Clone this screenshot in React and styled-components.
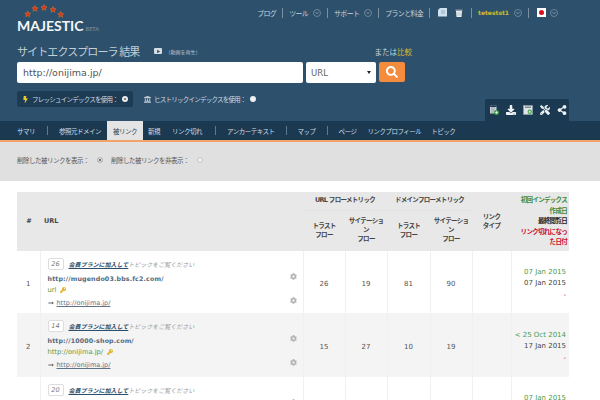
import React from 'react';
import styled, { createGlobalStyle } from 'styled-components';
import { FaBolt, FaChevronDown, FaCog, FaDownload, FaKey, FaLandmark, FaLongArrowAltRight, FaPlay, FaSearch, FaShareAlt, FaTools } from 'react-icons/fa';

const GlobalStyle = createGlobalStyle`
  html, body {
    margin: 0;
    width: 600px;
    height: 400px;
    overflow: hidden;
    background: #fff;
    font-family: "DejaVu Sans", "Noto Sans CJK JP", sans-serif;
  }
  * { box-sizing: border-box; }
`;

const Header = styled.header`
  height: 121px;
  background: #2d506c;
  padding-left: 17px;
  display: flex;
  flex-direction: column;
`;

const TopBar = styled.div`
  height: 40px;
  display: flex;
  justify-content: space-between;
`;

const Logo = styled.div`
  width: 80px;
  padding-top: 4px;
  svg { display: block; margin-left: 7px; }
`;

const LogoText = styled.div`
  display: flex;
  align-items: baseline;
  margin-top: -5px;
  color: #f4f6f8;
  font-family: "Lato", sans-serif;
  font-size: 14px;
  font-weight: 700;
  white-space: nowrap;
  span { margin-left: 2px; font-size: 5.5px; color: #6e8798; }
`;

const TopNav = styled.nav`
  display: flex;
  align-items: center;
  height: 25px;
  padding-right: 34px;
  font-size: 7px;
  letter-spacing: -0.7px;
`;

const TopItem = styled.div`
  display: flex;
  align-items: center;
  gap: ${(p) => (p.$wide ? p.$wide : 5)}px;
  padding: 0 ${(p) => (p.$wide ? 8 : 6)}px;
  height: 10px;
  color: #c9d3db;
  border-left: ${(p) => (p.$first ? 'none' : '1px solid #7890a2')};
`;

const UserName = styled.span`
  color: #d6b92e;
  font-size: 6px;
  font-weight: 700;
  letter-spacing: 0;
`;

const Drop = styled.span`
  width: 8px;
  height: 8px;
  border: 1px solid #6d8598;
  border-radius: 50%;
  display: grid;
  place-items: center;
  color: #8aa0b0;
  svg { width: 4px; height: 4px; }
`;

const Flag = styled.span`
  width: 9px;
  height: 9px;
  background: #fff;
  display: grid;
  place-items: center;
  &::after {
    content: '';
    width: 5px;
    height: 5px;
    border-radius: 50%;
    background: #d8101c;
  }
`;

const TitleRow = styled.div`
  height: 22px;
  width: 395px;
  display: flex;
  align-items: center;
  justify-content: space-between;
`;

const TitleLeft = styled.div`
  display: flex;
  align-items: center;
`;

const Title = styled.h1`
  margin: 0;
  font-size: 11px;
  font-weight: 400;
  letter-spacing: -0.9px;
  color: #c3ced6;
  font-family: "Noto Sans CJK JP", sans-serif;
`;

const Video = styled.span`
  display: flex;
  align-items: center;
  margin-left: 15px;
  color: #b9c6d0;
  font-size: 5px;
  gap: 3px;
`;

const VideoIcon = styled.span`
  width: 8px;
  height: 6px;
  background: #d5dde3;
  border-radius: 1px;
  display: grid;
  place-items: center;
  color: #2d506c;
  svg { width: 3px; height: 3px; }
`;

const Compare = styled.div`
  font-size: 7.5px;
  color: #c9d3db;
  span { color: #d6b92e; }
`;

const SearchRow = styled.form`
  display: flex;
  gap: 3px;
  margin: 0;
`;

const UrlInput = styled.div`
  width: 286px;
  height: 21px;
  padding-left: 6px;
  background: #fff;
  border-radius: 2px;
  color: #555;
  font-size: 9.5px;
  line-height: 21px;
`;

const TypeSelect = styled.div`
  width: 70px;
  height: 21px;
  padding: 0 5px;
  background: #fff;
  border-radius: 2px;
  color: #666;
  font-size: 8.5px;
  display: flex;
  align-items: center;
  justify-content: space-between;
  &::after {
    content: '';
    border: 2.5px solid transparent;
    border-top: 3px solid #222;
    border-bottom: 0;
  }
`;

const SearchButton = styled.div`
  width: 26px;
  height: 20px;
  background: #f58b3d;
  border-radius: 2px;
  color: #fff;
  display: grid;
  place-items: center;
  svg { width: 12px; height: 12px; }
`;

const BottomRow = styled.div`
  flex: 1;
  display: flex;
  justify-content: space-between;
  align-items: flex-end;
  padding-right: 31px;
`;

const IndexOptions = styled.div`
  display: flex;
  align-items: center;
  gap: 11px;
  align-self: flex-start;
  margin-top: 8px;
`;

const IndexOption = styled.div`
  height: 16px;
  padding: 0 ${(p) => (p.$active ? '5px' : '0')};
  background: ${(p) => (p.$active ? '#1d3b53' : 'transparent')};
  border-radius: 2px;
  display: flex;
  align-items: center;
  gap: 2px;
  white-space: nowrap;
  color: #d3dbe1;
  font-size: 6.500px;
  letter-spacing: -0.75px;
  svg { width: 7px; height: 7px; color: ${(p) => (p.$active ? '#e8c92f' : '#c4ccd2')}; margin-right: 1px; }
`;

const OptionRadio = styled.span`
  width: 6px;
  height: 6px;
  border-radius: 50%;
  margin-left: 2px;
  background: #eef1f3;
  border: ${(p) => (p.$on ? '2px solid #e8ecef' : 'none')};
  box-shadow: ${(p) => (p.$on ? 'inset 0 0 0 2px #333' : 'none')};
`;

const ToolTab = styled.div`
  width: 84px;
  height: 22px;
  background: #1b3a52;
  border-radius: 2px 2px 0 0;
  display: flex;
  align-items: center;
  gap: 7px;
  padding-left: 4px;
  color: #eef2f4;
  svg { width: 10px; height: 10px; }
`;

const Nav = styled.nav`
  height: 19px;
  background: #1b3a52;
  padding-left: 17px;
  display: flex;
  align-items: stretch;
  font-size: 6.500px;
  letter-spacing: -0.5px;
  font-family: "Noto Sans CJK JP", sans-serif;
`;

const NavItem = styled.div`
  display: flex;
  align-items: center;
  padding: 0 ${(p) => (p.$active ? '6px' : '0')};
  margin-right: ${(p) => (p.$gap ? p.$gap : 0)}px;
  margin-left: ${(p) => (p.$active ? '-6px' : '0')};
  background: ${(p) => (p.$active ? '#e4e4e4' : 'transparent')};
  color: ${(p) => (p.$active ? '#2b3b48' : '#d3dce3')};
`;

const NavSep = styled.div`
  width: 1px;
  height: 9px;
  align-self: center;
  background: #5e7a8e;
  margin-right: 11px;
`;

const OrangeLine = styled.div`
  height: 2px;
  background: #f2a367;
`;

const FilterBar = styled.div`
  height: 39px;
  background: #e0e0e0;
  padding: 0 17px 3px;
  display: flex;
  align-items: center;
  color: #555;
  font-size: 6.500px;
  letter-spacing: -0.5px;
  font-family: "Noto Sans CJK JP", sans-serif;
`;

const Radio = styled.span`
  width: 6px;
  height: 6px;
  margin: 0 8px 0 8px;
  border-radius: 50%;
  border: 1px solid #c4c4c4;
  background: ${(p) => (p.$on ? '#555' : '#eee')};
  box-shadow: ${(p) => (p.$on ? 'inset 0 0 0 1px #eee' : 'none')};
`;

const Table = styled.table`
  margin: 11px 0 0 17px;
  width: 552px;
  border-collapse: collapse;
  table-layout: fixed;
  font-size: 7px;
  color: #555;
`;

const Head = styled.th`
  background: #e8e8e8;
  padding: 0;
  font-size: 6.500px;
  font-weight: 700;
  letter-spacing: -0.7px;
  color: #444;
  text-align: ${(p) => p.$align || 'center'};
  height: ${(p) => p.$h || 'auto'};
  line-height: 9px;
  border-bottom: ${(p) => (p.$line ? '1px solid #e2e2e2' : 'none')};
`;

const UrlHead = styled.span`
  padding-left: 4px;
  letter-spacing: 0;
`;

const DateHead = styled.div`
  width: 50px;
  margin-left: auto;
  padding-right: 2px;
  line-height: 10.5px;
  text-align: right;
  color: ${(p) => p.$color};
`;

const Row = styled.tr`
  background: ${(p) => (p.$alt ? '#f4f4f4' : '#fff')};
`;

const Cell = styled.td`
  padding: 3px 0 0;
  border-left: 1px solid #f0f0f0;
  text-align: center;
  height: ${(p) => p.$h}px;
  font-size: 7px;
  color: #555;
  &:first-child { border-left: 0; }
`;

const UrlCell = styled.td`
  padding: 0 6px 0 7px;
  border-left: 1px solid #f0f0f0;
  vertical-align: top;
  position: relative;
`;

const TopicLine = styled.div`
  display: flex;
  align-items: center;
  height: 12px;
  margin-top: 7px;
  font-size: 6px;
  font-style: italic;
  color: #999;
  font-family: "Noto Sans CJK JP", sans-serif;
  a { color: #2c4f6b; font-weight: 700; text-decoration: underline; }
`;

const Score = styled.span`
  width: 16px;
  height: 12px;
  margin-right: 5px;
  background: #fff;
  border: 1px solid #ddd;
  border-radius: 2px;
  font-family: "DejaVu Sans", sans-serif;
  font-size: 6.500px;
  font-style: italic;
  color: #777;
  text-align: center;
  line-height: 10px;
`;

const Source = styled.div`
  margin-top: 4px;
  font-size: 6.300px;
  font-weight: 700;
  letter-spacing: 0.15px;
  color: #55687c;
  line-height: 10px;
`;

const Anchor = styled.div`
  margin-top: 1px;
  display: flex;
  align-items: center;
  gap: 4px;
  height: 10px;
  font-size: 6.700px;
  color: #5d9440;
  svg { width: 6px; height: 6px; color: #e3b83c; }
`;

const Target = styled.div`
  margin-top: 3px;
  display: flex;
  align-items: center;
  gap: 3px;
  font-size: 6.500px;
  height: 10px;
  color: #5f7288;
  span { text-decoration: underline; }
  svg { width: 6px; height: 6px; color: #666; }
`;

const Gear = styled.span`
  position: absolute;
  right: 6px;
  top: ${(p) => p.$top}px;
  color: #b4b4b4;
  display: flex;
  svg { width: 7px; height: 7px; }
`;

const DateCell = styled.td`
  padding: 4px 3px 0 0;
  border-left: 1px solid #f0f0f0;
  text-align: right;
  font-size: 7px;
  line-height: 11.500px;
`;

const DateLine = styled.div`
  color: ${(p) => p.$color};
`;

const NotesIcon = () => (
  <svg width="9" height="10" viewBox="0 0 9 10">
    <path d="M2 0h7v8.500H0V2z" fill="#cfe0ee" />
    <path d="M3 3h4M3 5h4" stroke="#7fa3c2" strokeWidth="0.8" />
  </svg>
);

const TrashIcon = () => (
  <svg width="8" height="8" viewBox="0 0 8 8">
    <path d="M0.500 0.500h7v1.500h-7z" fill="#8e9aa3" />
    <path d="M1 2h6l-.5 6h-5z" fill="#eef1f3" />
    <path d="M3 3v4M5 3v4" stroke="#9aa5ad" strokeWidth="0.6" />
  </svg>
);

const AddDbIcon = () => (
  <svg viewBox="0 0 10 10">
    <path d="M1 1.500A3.500 1.500 0 0 1 8 1.500" fill="none" stroke="#58707f" />
    <rect x="1" y="2" width="6.500" height="6.500" fill="#cdd3d8" />
    <path d="M3 2v6.500M5 2v6.500" stroke="#7d8b95" strokeWidth="0.7" />
    <circle cx="7.500" cy="7.500" r="2.500" fill="#37a346" />
    <path d="M6.200 7.500h2.600M7.500 6.200v2.600" stroke="#fff" strokeWidth="0.8" />
  </svg>
);

const AddReportIcon = () => (
  <svg viewBox="0 0 10 10">
    <rect x="0.500" y="0.500" width="9" height="9" fill="#dfe4e8" stroke="#8fa0ac" strokeWidth="0.6" />
    <rect x="2" y="1.500" width="6" height="1.500" fill="#7d8b95" />
    <circle cx="6.800" cy="6.800" r="2.200" fill="#4aa84f" />
    <path d="M5.700 6.800h2.200M6.800 5.700v2.200" stroke="#fff" strokeWidth="0.7" />
  </svg>
);

const StarArc = () => {
  const stars = [[3.700, 10], [11, 4.500], [20, 3.500], [29, 5.500], [36.700, 10.500]];
  return (
    <svg width="42" height="18" viewBox="0 0 42 18">
      {stars.map(([x, y]) => (
        <polygon
          key={x}
          points={`${x},${y - 3} ${x + 0.9},${y - 0.9} ${x + 3},${y - 0.7} ${x + 1.400},${y + 0.7} ${x + 1.900},${y + 2.800} ${x},${y + 1.600} ${x - 1.900},${y + 2.800} ${x - 1.400},${y + 0.7} ${x - 3},${y - 0.7} ${x - 0.9},${y - 0.9}`}
          fill="#e0301a"
          stroke="#d9822a"
          strokeWidth="0.5"
        />
      ))}
    </svg>
  );
};

const rows = [
  { id: 1, h: 62, score: 26, source: 'http://mugendo03.bbs.fc2.com/', anchor: 'url', nums: [26, 19, 81, 90], first: '07 Jan 2015', last: '07 Jan 2015' },
  { id: 2, h: 64, alt: true, score: 14, source: 'http://10000-shop.com/', anchor: 'http://onijima.jp/', nums: [15, 27, 10, 19], first: '< 25 Oct 2014', last: '17 Jan 2015' },
  { id: 3, h: 62, score: 20, source: 'http://mugendo03.bbs.fc2.com/', anchor: 'url', nums: [26, 19, 81, 90], first: '07 Jan 2015', last: '07 Jan 2015' },
];

function LinkRow({ row }) {
  return (
    <Row $alt={row.alt}>
      <Cell $h={row.h}>{row.id}</Cell>
      <UrlCell>
        <TopicLine>
          <Score>{row.score}</Score>
          <a>会員プランに加入して</a>トピックをご覧ください
        </TopicLine>
        <Source>{row.source}</Source>
        <Anchor>{row.anchor} <FaKey /></Anchor>
        <Target><FaLongArrowAltRight /> <span>http://onijima.jp/</span></Target>
        <Gear $top={22}><FaCog /></Gear>
        <Gear $top={46}><FaCog /></Gear>
      </UrlCell>
      {row.nums.map((n, i) => <Cell key={i}>{n}</Cell>)}
      <Cell />
      <DateCell>
        <DateLine $color="#4f9a4a">{row.first}</DateLine>
        <DateLine $color="#444">{row.last}</DateLine>
        <DateLine $color="#d0203a">-</DateLine>
      </DateCell>
    </Row>
  );
}

export default function App() {
  return (
    <>
      <GlobalStyle />
      <Header>
        <TopBar>
          <Logo>
            <StarArc />
            <LogoText>MAJESTIC<span>BETA</span></LogoText>
          </Logo>
          <TopNav>
            <TopItem $first>ブログ</TopItem>
            <TopItem>ツール <Drop><FaChevronDown /></Drop></TopItem>
            <TopItem>サポート <Drop><FaChevronDown /></Drop></TopItem>
            <TopItem>プランと料金</TopItem>
            <TopItem $wide={8}><NotesIcon /> <TrashIcon /></TopItem>
            <TopItem><UserName>tetestst1</UserName> <Drop><FaChevronDown /></Drop></TopItem>
            <TopItem $wide={4}><Flag /> <Drop><FaChevronDown /></Drop></TopItem>
          </TopNav>
        </TopBar>
        <TitleRow>
          <TitleLeft>
            <Title>サイトエクスプローラ 結果</Title>
            <Video><VideoIcon><FaPlay /></VideoIcon>（動画を再生）</Video>
          </TitleLeft>
          <Compare>または<span>比較</span></Compare>
        </TitleRow>
        <SearchRow>
          <UrlInput>http://onijima.jp/</UrlInput>
          <TypeSelect>URL</TypeSelect>
          <SearchButton><FaSearch /></SearchButton>
        </SearchRow>
        <BottomRow>
          <IndexOptions>
            <IndexOption $active><FaBolt />フレッシュインデックスを使用： <OptionRadio $on /></IndexOption>
            <IndexOption><FaLandmark />ヒストリックインデックスを使用： <OptionRadio /></IndexOption>
          </IndexOptions>
          <ToolTab>
            <AddDbIcon />
            <FaDownload />
            <AddReportIcon />
            <FaTools />
            <FaShareAlt />
          </ToolTab>
        </BottomRow>
      </Header>
      <Nav>
        <NavItem $gap={12}>サマリ</NavItem><NavSep />
        <NavItem $gap={12}>参照元ドメイン</NavItem>
        <NavItem $active $gap={5}>被リンク</NavItem>
        <NavItem $gap={12}>新規</NavItem>
        <NavItem $gap={13}>リンク切れ</NavItem><NavSep />
        <NavItem $gap={11}>アンカーテキスト</NavItem><NavSep />
        <NavItem $gap={11}>マップ</NavItem><NavSep />
        <NavItem $gap={11}>ページ</NavItem>
        <NavItem $gap={10}>リンクプロフィール</NavItem>
        <NavItem>トピック</NavItem>
      </Nav>
      <OrangeLine />
      <FilterBar>
        削除した被リンクを表示： <Radio $on /> 削除した被リンクを非表示： <Radio />
      </FilterBar>
      <Table>
        <colgroup>
          <col width="23" />
          <col width="263" />
          <col width="42" />
          <col width="42" />
          <col width="43" />
          <col width="42" />
          <col width="39" />
          <col width="58" />
        </colgroup>
        <thead>
          <tr>
            <Head rowSpan={2}>#</Head>
            <Head rowSpan={2} $align="left"><UrlHead>URL</UrlHead></Head>
            <Head colSpan={2} $h="18px" $line>URL フローメトリック</Head>
            <Head colSpan={2} $h="18px" $line>ドメインフローメトリック</Head>
            <Head rowSpan={2}>リンク<br />タイプ</Head>
            <Head rowSpan={2}>
              <DateHead $color="#3c8a3c">初回インデックス作成日</DateHead>
              <DateHead $color="#222">最終閲覧日</DateHead>
              <DateHead $color="#c8102e">リンク切れになった日付</DateHead>
            </Head>
          </tr>
          <tr>
            <Head $h="41px">トラスト<br />フロー</Head>
            <Head>サイテーショ<br />ン<br />フロー</Head>
            <Head>トラスト<br />フロー</Head>
            <Head>サイテーショ<br />ン<br />フロー</Head>
          </tr>
        </thead>
        <tbody>
          {rows.map((row) => <LinkRow key={row.id} row={row} />)}
        </tbody>
      </Table>
    </>
  );
}
